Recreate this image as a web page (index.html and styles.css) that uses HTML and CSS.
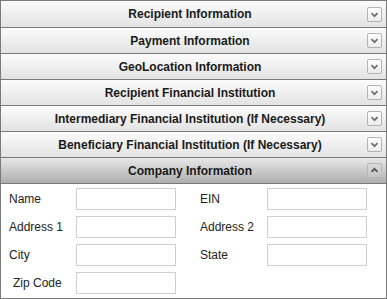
FILE: index.html
```html
<!DOCTYPE html>
<html lang="en">
<head>
    <meta charset="UTF-8">
    <title>Company Information</title>
    <link rel="stylesheet" href="styles.css">
</head>
<body>
    <div class="accordion">
        <div class="acc-header">
            <span class="acc-title">Recipient Information</span>
            <span class="acc-icon"><svg viewBox="0 0 15 15"><path d="M4 6l3.5 3.5L11 6"/></svg></span>
        </div>
        <div class="acc-header">
            <span class="acc-title">Payment Information</span>
            <span class="acc-icon"><svg viewBox="0 0 15 15"><path d="M4 6l3.5 3.5L11 6"/></svg></span>
        </div>
        <div class="acc-header">
            <span class="acc-title">GeoLocation Information</span>
            <span class="acc-icon"><svg viewBox="0 0 15 15"><path d="M4 6l3.5 3.5L11 6"/></svg></span>
        </div>
        <div class="acc-header">
            <span class="acc-title">Recipient Financial Institution</span>
            <span class="acc-icon"><svg viewBox="0 0 15 15"><path d="M4 6l3.5 3.5L11 6"/></svg></span>
        </div>
        <div class="acc-header">
            <span class="acc-title">Intermediary Financial Institution (If Necessary)</span>
            <span class="acc-icon"><svg viewBox="0 0 15 15"><path d="M4 6l3.5 3.5L11 6"/></svg></span>
        </div>
        <div class="acc-header">
            <span class="acc-title">Beneficiary Financial Institution (If Necessary)</span>
            <span class="acc-icon"><svg viewBox="0 0 15 15"><path d="M4 6l3.5 3.5L11 6"/></svg></span>
        </div>
        <div class="acc-header active">
            <span class="acc-title">Company Information</span>
            <span class="acc-icon"><svg viewBox="0 0 15 15"><path d="M4 9l3.5-3.5L11 9"/></svg></span>
        </div>
        <div class="acc-body">
            <label class="field-label" for="name">Name</label>
            <input class="field-input" type="text" id="name">
            <label class="field-label" for="ein">EIN</label>
            <input class="field-input" type="text" id="ein">

            <label class="field-label" for="address1">Address 1</label>
            <input class="field-input" type="text" id="address1">
            <label class="field-label" for="address2">Address 2</label>
            <input class="field-input" type="text" id="address2">

            <label class="field-label" for="city">City</label>
            <input class="field-input" type="text" id="city">
            <label class="field-label" for="state">State</label>
            <input class="field-input" type="text" id="state">

            <label class="field-label indent" for="zip">Zip Code</label>
            <input class="field-input" type="text" id="zip">
        </div>
    </div>
</body>
</html>
```

FILE: styles.css
```css
body {
    margin: 0;
    font-family: "Liberation Sans", Arial, sans-serif;
    background-color: #fff;
}

.accordion {
    width: 385px;
    border: 1px solid #7a7a7a;
}

.acc-header {
    height: 25px;
    border-bottom: 1px solid #7a7a7a;
    display: flex;
    align-items: center;
    padding-left: 12px;
    background: linear-gradient(#fbfbfb, #e3e3e3);
}

.acc-header:first-child {
    height: 26px;
}

.acc-header.active {
    background: linear-gradient(#e8e8e8, #aeaeae);
}

.acc-title {
    flex: 1;
    text-align: center;
    font-weight: bold;
    font-size: 12px;
    color: #1a1a1a;
}

.acc-icon {
    width: 13px;
    height: 13px;
    margin-right: 4px;
    border: 1px solid #b4b4b4;
    border-radius: 2px;
    background: linear-gradient(#fdfdfd, #ececec);
    display: flex;
}

.acc-icon svg {
    width: 13px;
    height: 13px;
    fill: none;
    stroke: #707070;
    stroke-width: 2;
}

.active .acc-icon {
    border-color: #b8b8b8;
    background: linear-gradient(#dcdcdc, #c4c4c4);
}

.active .acc-icon svg {
    stroke: #555;
}

/* company fields */
.acc-body {
    height: 110px;
    padding: 4px 0 0 8px;
    display: grid;
    grid-template-columns: 67px 124px 67px 100px;
    grid-auto-rows: 22px;
    row-gap: 6px;
    align-items: center;
}

.field-label {
    font-size: 12px;
    color: #222;
}

.field-label.indent {
    padding-left: 4px;
}

.field-input {
    width: 100px;
    height: 22px;
    box-sizing: border-box;
    margin: 0;
    border: 1px solid #cfcfcf;
    padding: 2px 4px;
    font-size: 12px;
}
```
